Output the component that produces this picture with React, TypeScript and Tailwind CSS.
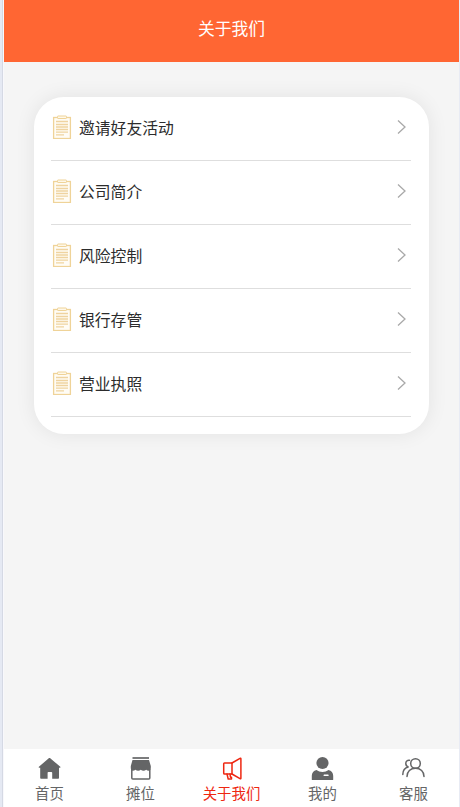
import { useState } from 'react';
import type { ReactNode } from 'react';

const menuItems = ['邀请好友活动', '公司简介', '风险控制', '银行存管', '营业执照'];

function ClipboardIcon() {
  return (
    <svg className="mb-[3px] h-6 w-5 flex-shrink-0" viewBox="0 0 20 24" fill="none">
      <rect x="1.6" y="2.5" width="16.8" height="21" fill="#fffcf5" stroke="#efd398" strokeWidth="1.3" />
      <rect x="5.5" y="1" width="9" height="2.5" rx="0.6" fill="#fff8e9" stroke="#efd398" />
      <path
        d="M4 6.5h12M4 9.5h12M4 12h12M4 14.5h12M4 17.2h12M4 19.8h8"
        stroke="#efd3a0"
        strokeWidth="1.3"
      />
    </svg>
  );
}

function ArrowIcon() {
  return (
    <svg className="mb-1 h-4 w-2.5 flex-shrink-0" viewBox="0 0 10 16" fill="none">
      <path d="M1 1.5 8 8l-7 6.5" stroke="#a9a9a9" strokeWidth="1.3" />
    </svg>
  );
}

function HomeIcon() {
  return (
    <svg className="h-6 w-6" viewBox="0 0 24 24" fill="currentColor">
      <path d="M11.5 2c.4 0 .7.2 1 .4l9.8 8.4c.4.4.2.9-.3.9h-1v10.300c0 .5-.3.800-.8.800h-6v-6c0-.5-.3-.8-.8-.8H10.400c-.5 0-.8.3-.8.8v6H3c-.5 0-.8-.3-.8-.8V11.700h-1c-.6 0-.8-.5-.3-.9l9.600-8.400c.3-.2.6-.4 1-.4Z" />
    </svg>
  );
}

function ShopIcon() {
  return (
    <svg className="h-6 w-6" viewBox="0 0 24 24" fill="none">
      <path d="M3.5 2h16.500" stroke="currentColor" strokeWidth="1.7" />
      <path
        d="M3.5 4H20l1.800 6v2c0 1.5-.8 2.500-2 2.700-1 0-1.900-.3-2.600-1-.8.700-1.700 1-2.700 1s-2-.3-2.700-1c-.7.700-1.700 1-2.700 1s-1.900-.3-2.700-1c-.7.700-1.600 1-2.600 1-1.200-.2-2-1.200-2-2.700v-2Z"
        fill="currentColor"
      />
      <path d="M2.800 13v9c0 .7.3 1 1 1h16c.7 0 1-.3 1-1v-9" stroke="currentColor" strokeWidth="1.5" />
    </svg>
  );
}

function HornIcon() {
  return (
    <svg
      className="h-6 w-6"
      viewBox="0 0 24 24"
      fill="none"
      stroke="currentColor"
      strokeWidth="1.5"
      strokeLinejoin="round"
      strokeLinecap="round"
    >
      <path d="M12 7H4.500c-.5 0-.8.3-.8.8v9.400c0 .5.3.8.8.8H12V7Z" />
      <path d="m12 7 8-4.700c.5-.3.9-.1.9.4v19.600c0 .5-.4.7-.9.4L12 18" />
      <path d="m7 18 1.200 5h3.300v-1.800h-1L10 18" />
    </svg>
  );
}

function UserIcon() {
  return (
    <svg className="h-6 w-6" viewBox="0 0 24 24">
      <circle cx="11.5" cy="7" r="6.1" fill="currentColor" />
      <path
        d="M5.500 14c1.700 1.200 3.700 1.900 6 1.900s4.300-.7 6-1.900c2.900.6 4.700 3 4.700 5.700v3.600c0 .8-.3 1.200-1.200 1.200H2c-.9 0-1.200-.4-1.200-1.200v-3.600c0-2.700 1.800-5.100 4.700-5.700Z"
        fill="currentColor"
      />
      <rect x="12.600" y="18.600" width="5" height="1.500" rx=".4" fill="#fff" />
    </svg>
  );
}

function ServiceIcon() {
  return (
    <svg
      className="h-6 w-6"
      viewBox="0 0 24 24"
      fill="none"
      stroke="currentColor"
      strokeWidth="1.5"
      strokeLinecap="round"
    >
      <circle cx="13.500" cy="7.500" r="4.800" />
      <path d="M5 20.500c0-4.900 3.500-8.200 8.500-8.200s8.500 3.300 8.500 8.200" />
      <path d="M7.500 4.300C5.200 4 3.800 5.500 3.800 7.500c0 1.700 1 3 2.700 3.500C2.800 11.800.8 14.500.8 18.500" />
    </svg>
  );
}

const tabs: { label: string; icon: ReactNode }[] = [
  { label: '首页', icon: <HomeIcon /> },
  { label: '摊位', icon: <ShopIcon /> },
  { label: '关于我们', icon: <HornIcon /> },
  { label: '我的', icon: <UserIcon /> },
  { label: '客服', icon: <ServiceIcon /> },
];

export default function App() {
  const [active, setActive] = useState('关于我们');

  return (
    <div className="flex h-[807px] w-[460px] overflow-hidden bg-[#e8ebf4] font-['Liberation_Sans','Noto_Sans_CJK_SC',sans-serif]">
      <div className="w-1 flex-shrink-0 border-r border-[#f8f8fc] bg-[#e5e9f3]">
        <div className="ml-auto h-full w-px bg-[#d5d9e4]" />
      </div>
      <div className="flex w-[455px] flex-col bg-[#f5f5f5]">
        <header className="flex h-[62px] flex-shrink-0 items-center justify-center bg-[#ff6633] pb-0.5">
          <h1 className="text-[16.8px] leading-6 text-white">关于我们</h1>
        </header>

        <main className="flex-1 px-[30px] pt-[35px]">
          <ul className="h-[337px] w-[395px] rounded-[30px] bg-white pr-[18px] pl-[17px] shadow-[0_0_20px_rgba(0,0,0,0.08)]">
            {menuItems.map((item) => (
              <li
                key={item}
                className="flex h-16 items-center border-b border-[#dedede] pr-1 pl-px"
              >
                <ClipboardIcon />
                <span className="ml-[7px] flex-1 text-[15.8px] leading-6 text-[#2c2c2c]">{item}</span>
                <ArrowIcon />
              </li>
            ))}
          </ul>
        </main>

        <nav className="grid h-[58px] flex-shrink-0 grid-cols-5 bg-white">
          {tabs.map((tab) => (
            <button
              key={tab.label}
              type="button"
              onClick={() => setActive(tab.label)}
              className={`flex flex-col items-center pt-[7px] ${
                active === tab.label ? 'text-[#ee2711]' : 'text-[#646566]'
              }`}
            >
              {tab.icon}
              <span className="mt-1 text-[14.4px] leading-5">{tab.label}</span>
            </button>
          ))}
        </nav>
      </div>
    </div>
  );
}
